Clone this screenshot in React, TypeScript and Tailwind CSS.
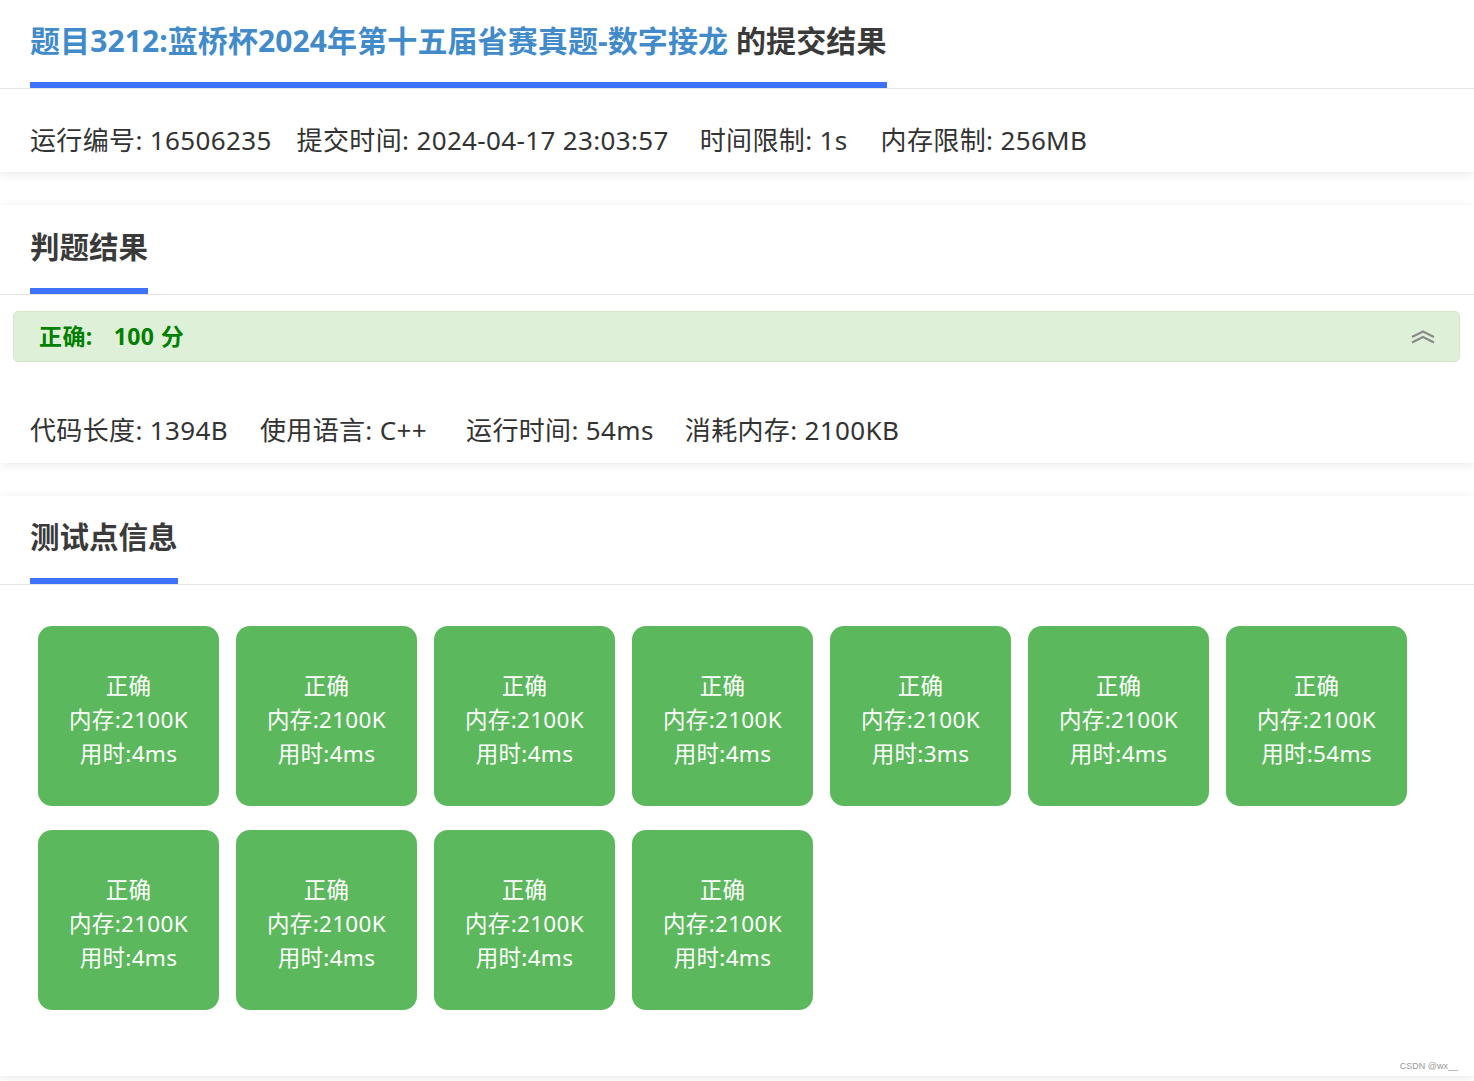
import React from "react";

const cases = [
  { mem: "2100K", time: "4ms" },
  { mem: "2100K", time: "4ms" },
  { mem: "2100K", time: "4ms" },
  { mem: "2100K", time: "4ms" },
  { mem: "2100K", time: "3ms" },
  { mem: "2100K", time: "4ms" },
  { mem: "2100K", time: "54ms" },
  { mem: "2100K", time: "4ms" },
  { mem: "2100K", time: "4ms" },
  { mem: "2100K", time: "4ms" },
  { mem: "2100K", time: "4ms" },
];

const font = { fontFamily: '"Noto Sans", "Noto Sans CJK SC", sans-serif' };

const Heading = ({ children, top = 22 }: { children: React.ReactNode; top?: number }) => (
  <div className="border-b border-[#e3e3e3] pl-[30px]">
    <h2
      className={
        "inline-block border-b-[6px] border-[#3f72fb] pb-[22px] text-[29.5px] font-bold leading-[38px] text-[#3a3a3a] " +
        (top === 23 ? "pt-[23px]" : "pt-[22px]")
      }
    >
      {children}
    </h2>
  </div>
);

const App = () => {
  return (
    <div className="min-h-screen w-full bg-white pb-[5px]" style={font}>
      {/* submission header */}
      <div className="bg-white shadow-[0_2px_10px_rgba(0,0,0,0.09)]">
        <div className="border-b border-[#e3e3e3] pl-[30px]">
          <h1 className="inline-block border-b-[6px] border-[#3f72fb] pt-[22px] pb-[22px] text-[30px] font-bold leading-[38px] tracking-[0.1px]">
            <span className="text-[#428bca]">题目3212:蓝桥杯2024年第十五届省赛真题-数字接龙</span>
            <span className="text-[#3a3a3a]"> 的提交结果</span>
          </h1>
        </div>
        <div className="flex pl-[30px] pt-[33px] pb-[14px] text-[26px] leading-[36px] tracking-[0.35px] text-[#333]">
          <span>运行编号: 16506235</span>
          <span className="ml-[25px]">提交时间: 2024-04-17 23:03:57</span>
          <span className="ml-[31px]">时间限制: 1s</span>
          <span className="ml-[33px]">内存限制: 256MB</span>
        </div>
      </div>

      {/* judge result */}
      <div className="mt-[33px] bg-white shadow-[0_2px_10px_rgba(0,0,0,0.09)]">
        <Heading top={23}>判题结果</Heading>
        <div className="mx-[13px] mr-[14px] mt-[16px] flex h-[51px] items-center justify-between rounded-[5px] border border-[#d6e9c6] bg-[#dff0d8] pl-[25px] pr-[24px]">
          <div className="flex text-[23px] font-bold tracking-[0.4px] text-[#008000]">
            <span>正确:</span>
            <span className="ml-[21px]">100 分</span>
          </div>
          <svg width="24" height="14" viewBox="0 0 24 14" fill="none" stroke="#8a8a8a" strokeWidth="2.2" strokeLinejoin="miter">
            <polyline points="1,7 12,1.5 23,7" />
            <polyline points="1,12.5 12,7 23,12.5" />
          </svg>
        </div>
        <div className="flex pl-[30px] pt-[50px] pb-[15px] text-[26px] leading-[36px] tracking-[0.35px] text-[#333]">
          <span>代码长度: 1394B</span>
          <span className="ml-[32px]">使用语言: C++</span>
          <span className="ml-[39px]">运行时间: 54ms</span>
          <span className="ml-[31px]">消耗内存: 2100KB</span>
        </div>
      </div>

      {/* test cases */}
      <div className="relative mt-[33px] bg-white shadow-[0_2px_10px_rgba(0,0,0,0.09)]">
        <Heading>测试点信息</Heading>
        <div className="flex flex-wrap gap-x-[17px] gap-y-[24px] pl-[38px] pt-[41px] pb-[66px]">
          {cases.map((c, i) => (
            <div
              key={i}
              className="flex h-[180px] w-[181px] flex-col items-center justify-center rounded-[14px] bg-[#5cb85c] pt-[8px] text-[22.5px] leading-[34px] tracking-[0.3px] text-white"
            >
              <span>正确</span>
              <span>内存:{c.mem}</span>
              <span>用时:{c.time}</span>
            </div>
          ))}
        </div>
        <span className="absolute bottom-[3px] right-[16px] text-[9px] text-[#999]" style={{ fontFamily: '"Liberation Sans", sans-serif' }}>
          CSDN @wx__
        </span>
      </div>
    </div>
  );
};

export default App;
